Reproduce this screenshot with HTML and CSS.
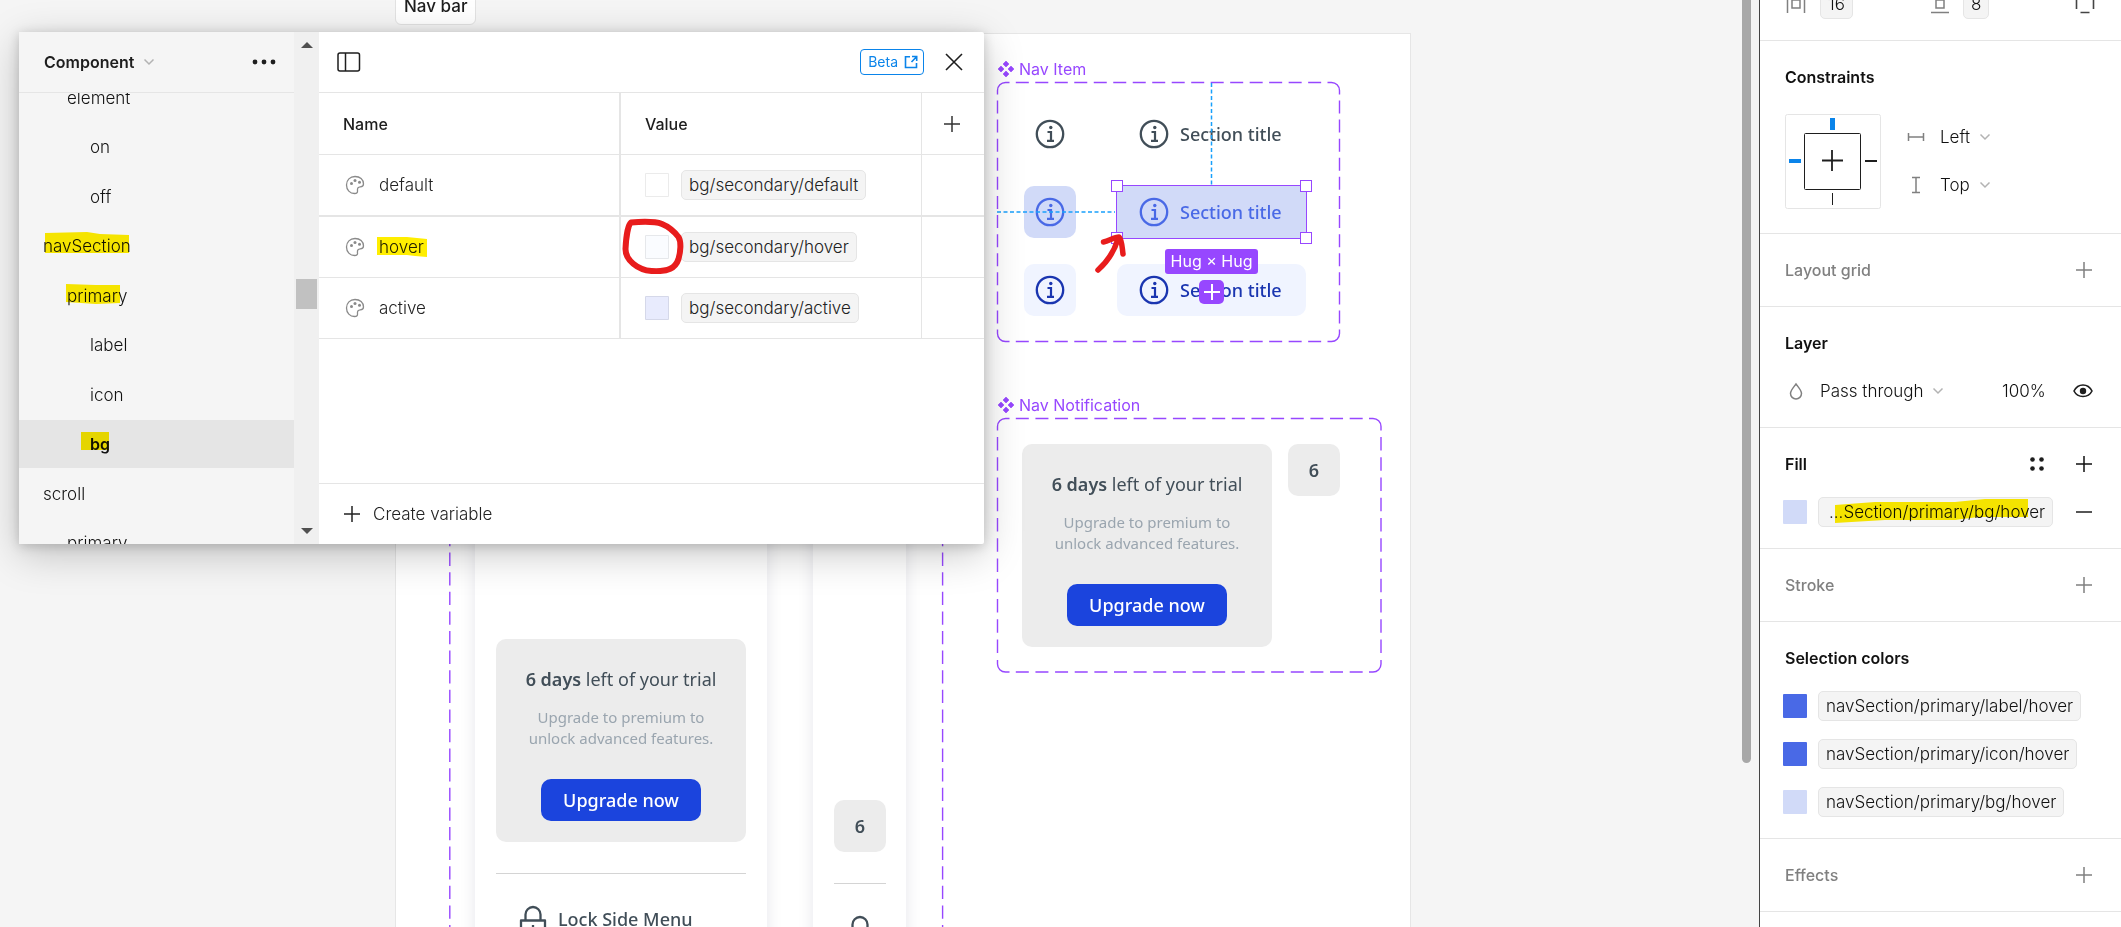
FILE: index.html
```html
<!DOCTYPE html>
<html lang="en">
<head>
<meta charset="utf-8">
<title>Nav bar</title>
<link rel="stylesheet" href="styles.css">
</head>
<body>
<svg class="defs" aria-hidden="true">
  <symbol id="plus" viewBox="0 0 18 18"><path d="M9 1v16M1 9h16" fill="none" stroke="currentColor" stroke-width="1.5"/></symbol>
  <symbol id="chevron" viewBox="0 0 12 8"><path d="M1.5 1.5 6 6l4.500-4.500" fill="none" stroke="currentColor" stroke-width="1.500"/></symbol>
  <symbol id="info" viewBox="0 0 30 30"><circle cx="15" cy="15" r="13.200" fill="none" stroke="currentColor" stroke-width="2.300"/><circle cx="15.800" cy="8.500" r="1.700" fill="currentColor"/><path d="M12.500 13h3.500v8.500M12 21.800h7" fill="none" stroke="currentColor" stroke-width="2.200"/></symbol>
  <symbol id="component" viewBox="0 0 16 16"><path d="M8 0l3 3-3 3-3-3zM8 10l3 3-3 3-3-3zM3 5l3 3-3 3-3-3zM13 5l3 3-3 3-3-3z" fill="currentColor" stroke="currentColor" stroke-width=".6" stroke-linejoin="round"/></symbol>
  <symbol id="palette" viewBox="0 0 20 20"><path d="M10 1.500C5 1.500 1.500 5 1.500 10s3.500 8.500 8 8.500c2.500 0 3.200-1 3-2.500-.3-2.800.5-4 2.800-4.200 2.200-.1 3.200-1 3.200-2.800 0-4.500-3.500-7.500-8.500-7.500z" fill="none" stroke="currentColor" stroke-width="1.300"/><circle cx="6.500" cy="8.500" r="1.500" fill="currentColor"/><circle cx="10" cy="5.500" r="1.500" fill="currentColor"/><circle cx="14.500" cy="7.300" r="1.500" fill="currentColor"/></symbol>
  <symbol id="lock" viewBox="0 0 28 34"><path d="M2 15.500h24v16H2zM6.500 15V9.500a7.500 7.500 0 0 1 15 0V15M14 20v7" fill="none" stroke="currentColor" stroke-width="2.300" stroke-linejoin="round"/></symbol>
</svg>

<main class="canvas">
  <h1 class="section-tag">Nav bar</h1>
  <div class="frame"></div>

  <section class="node navbar-set">
    <svg class="outline" width="496" height="500" viewBox="-1 -1 496 500"><path d="M.8 20v460M493.600 20v460" stroke-dasharray="13.300 6.300"/></svg>
    <div class="sidebar-wide">
      <div class="trial">
        <p class="trial-title"><strong>6 days</strong> left of your trial</p>
        <p class="trial-text">Upgrade to premium to unlock advanced features.</p>
        <button class="upgrade">Upgrade now</button>
      </div>
      <hr class="rule">
      <div class="lock-row"><svg width="28" height="34"><use href="#lock"/></svg><span>Lock Side Menu</span></div>
    </div>
    <div class="sidebar-slim">
      <div class="count">6</div>
      <hr class="rule">
      <svg width="28" height="34"><use href="#lock"/></svg>
    </div>
  </section>

  <section class="node item-set">
    <h2 class="set-name"><svg width="16" height="16"><use href="#component"/></svg>Nav Item</h2>
    <svg class="outline" width="345" height="262" viewBox="-1 -1 345 262">
      <path d="M.5 12.500v-4a8 8 0 0 1 8-8h4M330.500.5h4a8 8 0 0 1 8 8v4M342.500 247.500v4a8 8 0 0 1-8 8h-4M12.500 259.500h-4a8 8 0 0 1-8-8v-4"/>
      <path d="M18.800.5h305.400M18.800 259.500h305.400" stroke-dasharray="13 6.490"/>
      <path d="M.5 18.500v223M342.500 18.500v223" stroke-dasharray="13 6.090"/>
    </svg>
    <div class="variants">
      <div class="tile"><svg width="30" height="30"><use href="#info"/></svg></div>
      <div class="nav-item"><svg width="30" height="30"><use href="#info"/></svg>Section title</div>
      <div class="tile hover"><svg width="30" height="30"><use href="#info"/></svg></div>
      <div class="nav-item hover selected"><svg width="30" height="30"><use href="#info"/></svg>Section title
        <i class="handle tl"></i><i class="handle tr"></i><i class="handle bl"></i><i class="handle br"></i>
      </div>
      <div class="tile active"><svg width="30" height="30"><use href="#info"/></svg></div>
      <div class="nav-item active"><svg width="30" height="30"><use href="#info"/></svg>Section title</div>
    </div>
    <svg class="guides" width="345" height="262" viewBox="0 0 345 262">
      <path d="M215.500 1v102M1 130h118" fill="none" stroke="#18a0fb" stroke-width="1.500" stroke-dasharray="4 2.500"/>
    </svg>
    <span class="size-badge">Hug × Hug</span>
    <button class="add-variant" aria-label="Add variant"><svg width="18" height="18" viewBox="0 0 18 18"><path d="M9 1v16M1 9h16" stroke="#fff" stroke-width="2"/></svg></button>
    <svg class="arrow" width="32" height="40" viewBox="0 0 32 40"><path d="M4 36C13 28 20 18 24 5M9.500 8C15 7 20 3 25 3c3 3 3 10 4 17" fill="none" stroke="#e81c1c" stroke-width="5.500" stroke-linecap="round" stroke-linejoin="round"/></svg>
  </section>

  <section class="node notice-set">
    <h2 class="set-name"><svg width="16" height="16"><use href="#component"/></svg>Nav Notification</h2>
    <svg class="outline" width="387" height="257" viewBox="-1 -1 387 257">
      <path d="M.5 12.500v-4a8 8 0 0 1 8-8h4M372 .5h4a8 8 0 0 1 8 8v4M384 242v4a8 8 0 0 1-8 8h-4M12.500 254h-4a8 8 0 0 1-8-8v-4"/>
      <path d="M18.800.5h347M18.800 254h347" stroke-dasharray="13 6.640"/>
      <path d="M.5 19v216M384 19v216" stroke-dasharray="13.500 6.750"/>
    </svg>
    <div class="notices">
      <div class="trial">
        <p class="trial-title"><strong>6 days</strong> left of your trial</p>
        <p class="trial-text">Upgrade to premium to unlock advanced features.</p>
        <button class="upgrade">Upgrade now</button>
      </div>
      <div class="count">6</div>
    </div>
  </section>

  <div class="canvas-scroll"></div>

  <section class="window" aria-label="Variables">
    <aside class="groups">
      <header class="groups-head">
        <button class="collection">Component <svg width="12" height="8"><use href="#chevron"/></svg></button>
        <button class="more" aria-label="More"><svg width="24" height="6" viewBox="0 0 24 6"><g fill="#1e1e1e"><circle cx="3" cy="3" r="2.400"/><circle cx="12" cy="3" r="2.400"/><circle cx="21" cy="3" r="2.400"/></g></svg></button>
      </header>
      <nav class="tree">
        <div class="tree-rows">
          <button class="group l2">element</button>
          <button class="group l3">on</button>
          <button class="group l3">off</button>
          <button class="group l1"><span class="marked"><svg class="mark" width="86" height="22" viewBox="0 0 86 22"><path d="M2 1 44 0l13 2 29 1v18H2z"/></svg>navSection</span></button>
          <button class="group l2"><span class="marked"><svg class="mark mark-primary" width="54" height="20" viewBox="0 0 54 20"><path d="M0 0 30 1l24 0v18l-24 1L0 18z"/></svg>primary</span></button>
          <button class="group l3">label</button>
          <button class="group l3">icon</button>
          <button class="group l3 current"><span class="marked"><svg class="mark mark-bg" width="28" height="18" viewBox="0 0 28 18"><path d="M0 0h28v18H0z"/></svg>bg</span></button>
          <button class="group l1">scroll</button>
          <button class="group l2">primary</button>
        </div>
      </nav>
    </aside>
    <div class="track">
      <svg width="12" height="6" viewBox="0 0 12 6"><path d="M0 6 6 0l6 6z" fill="#505050"/></svg>
      <div class="thumb"></div>
      <svg width="12" height="6" viewBox="0 0 12 6"><path d="M0 0h12L6 6z" fill="#505050"/></svg>
    </div>
    <div class="variables">
      <header class="variables-head">
        <button aria-label="Toggle groups"><svg width="24" height="20" viewBox="0 0 24 20"><rect x="1" y="1" width="21.500" height="18" rx="2" fill="none" stroke="#1e1e1e" stroke-width="1.500"/><path d="M8.500 1v18" stroke="#1e1e1e" stroke-width="1.500"/></svg></button>
        <a class="beta" href="#beta">Beta <svg width="14" height="14" viewBox="0 0 14 14"><path d="M6 1.700H1.500v10.800h11V8M8 1.500h4.700V6M12.500 1.700 7.500 7" fill="none" stroke="currentColor" stroke-width="1.600"/></svg></a>
        <button aria-label="Close"><svg width="18" height="18" viewBox="0 0 18 18"><path d="m1 1 16 16M17 1 1 17" stroke="#1e1e1e" stroke-width="1.600"/></svg></button>
      </header>
      <table class="grid">
        <colgroup><col class="col-name"><col><col class="col-add"></colgroup>
        <thead><tr><th>Name</th><th>Value</th><th><button aria-label="Add mode"><svg width="18" height="18"><use href="#plus"/></svg></button></th></tr></thead>
        <tbody>
          <tr><td><div class="cell"><svg width="20" height="20"><use href="#palette"/></svg>default</div></td><td><div class="value"><i class="swatch white"></i><button class="chip">bg/secondary/default</button></div></td><td></td></tr>
          <tr class="split"><td><div class="cell"><svg width="20" height="20"><use href="#palette"/></svg><span class="marked"><svg class="mark mark-hover" width="50" height="20" viewBox="0 0 50 20"><path d="M0 0 30 0l20 2v18l-12-1-8-1H0z"/></svg>hover</span></div></td><td><div class="value"><i class="swatch faint"></i><button class="chip">bg/secondary/hover</button>
            <svg class="ring" width="62" height="56" viewBox="0 0 62 56"><path d="M9 4.500C6 7 4 20 3.500 31c0 11 12 21 26 22 17 1 24-3 27-12 2-7 3-17 0-22C51 12 45 8 40 6 32 3 21 3.500 9 4.500z" fill="none" stroke="#e81c1c" stroke-width="6" stroke-linejoin="round"/></svg></div></td><td></td></tr>
          <tr><td><div class="cell"><svg width="20" height="20"><use href="#palette"/></svg>active</div></td><td><div class="value"><i class="swatch lilac"></i><button class="chip">bg/secondary/active</button></div></td><td></td></tr>
        </tbody>
      </table>
      <footer class="create"><button><svg width="18" height="18"><use href="#plus"/></svg>Create variable</button></footer>
    </div>
  </section>
</main>

<aside class="inspector">
  <section class="group-box clipped">
    <div class="row">
      <svg class="lead" width="20" height="20" viewBox="0 0 20 20"><path d="M1.500 0v19M18.500 0v19M6 6h8v8H6z" fill="none" stroke="#808080" stroke-width="1.500"/></svg>
      <button class="chip pad-value">16</button>
      <svg class="pad-icon" width="20" height="20" viewBox="0 0 20 20"><path d="M1 1.500h18M1 18.500h18M6 6h8v8H6z" fill="none" stroke="#808080" stroke-width="1.500"/></svg>
      <button class="chip">8</button>
      <svg class="tail" width="20" height="20" viewBox="0 0 20 20"><path d="M1.500 4v11M18.500 4v11M5.500 18.500h9M5.500 1h9" fill="none" stroke="#444" stroke-width="1.600"/></svg>
    </div>
  </section>
  <section class="group-box">
    <h3 class="row">Constraints</h3>
    <div class="constraints">
      <svg width="96" height="96" viewBox="0 0 96 96"><rect x=".5" y="1.500" width="95" height="94" rx="2" fill="#fff" stroke="#e5e5e5"/><rect x="19.500" y="20.500" width="56" height="56" rx="1" fill="none" stroke="#1e1e1e"/><path d="M37 47.500h21M47 37v21M80 48h12" stroke="#1e1e1e" stroke-width="1.800"/><path d="M47.500 80v12" stroke="#1e1e1e"/><path d="M45 5h5v12h-5zM4 46h12v4H4z" fill="#0a84ea"/></svg>
      <div class="axes">
        <label class="axis"><svg width="18" height="18" viewBox="0 0 18 18"><path d="M1.500 5v8M16.500 5v8M1.500 9h15" fill="none" stroke="#808080" stroke-width="1.500"/></svg><select aria-label="Horizontal constraint"><option>Left</option></select><svg class="chev" width="12" height="8"><use href="#chevron"/></svg></label>
        <label class="axis"><svg width="18" height="18" viewBox="0 0 18 18"><path d="M5 1.500h8M5 16.500h8M9 1.500v15" fill="none" stroke="#808080" stroke-width="1.500"/></svg><select aria-label="Vertical constraint"><option>Top</option></select><svg class="chev" width="12" height="8"><use href="#chevron"/></svg></label>
      </div>
    </div>
  </section>
  <section class="group-box empty"><h3 class="row">Layout grid<button class="tail" aria-label="Add layout grid"><svg width="18" height="18"><use href="#plus"/></svg></button></h3></section>
  <section class="group-box">
    <h3 class="row">Layer</h3>
    <div class="row">
      <svg class="lead" width="20" height="20" viewBox="0 0 20 20"><path d="M10 3C7 7 4.500 9.500 4.500 12.500a5.500 5.500 0 0 0 11 0C15.500 9.500 13 7 10 3z" fill="none" stroke="#808080" stroke-width="1.500"/></svg>
      <select class="blend" aria-label="Blend mode"><option>Pass through</option></select><svg class="chev" width="12" height="8"><use href="#chevron"/></svg>
      <input class="opacity" aria-label="Opacity" value="100%">
      <button aria-label="Toggle visibility"><svg width="20" height="14" viewBox="0 0 20 14"><path d="M1 7c2-4 5.500-6 9-6s7 2 9 6c-2 4-5.500 5.500-9 5.500S3 11 1 7z" fill="none" stroke="#1e1e1e" stroke-width="1.600"/><circle cx="10" cy="7" r="3.200" fill="#1e1e1e"/></svg></button>
    </div>
  </section>
  <section class="group-box">
    <h3 class="row">Fill<button class="tail" aria-label="Styles"><svg width="16" height="16" viewBox="0 0 16 16"><g fill="#1e1e1e"><circle cx="3.500" cy="3.500" r="2.300"/><circle cx="12.500" cy="3.500" r="2.300"/><circle cx="3.500" cy="12.500" r="2.300"/><circle cx="12.500" cy="12.500" r="2.300"/></g></svg></button><button class="next" aria-label="Add fill"><svg width="18" height="18"><use href="#plus"/></svg></button></h3>
    <div class="row paint"><i class="swatch pale"></i><button class="chip fill-chip"><span class="marked"><svg class="mark mark-fill" width="193" height="24" viewBox="0 0 193 24"><path d="M0 6 40 3l80 0 30-3h43v18l-50 0-23 3H50L0 24z"/></svg>...Section/primary/bg/hover</span></button><button class="tail" aria-label="Remove fill"><svg width="18" height="18" viewBox="0 0 18 18"><path d="M1 9h16" stroke="#1e1e1e" stroke-width="1.500"/></svg></button></div>
  </section>
  <section class="group-box empty"><h3 class="row">Stroke<button class="tail" aria-label="Add stroke"><svg width="18" height="18"><use href="#plus"/></svg></button></h3></section>
  <section class="group-box">
    <h3 class="row">Selection colors</h3>
    <div class="row paint"><i class="swatch blue"></i><button class="chip">navSection/primary/label/hover</button></div>
    <div class="row paint"><i class="swatch blue"></i><button class="chip">navSection/primary/icon/hover</button></div>
    <div class="row paint"><i class="swatch pale"></i><button class="chip">navSection/primary/bg/hover</button></div>
  </section>
  <section class="group-box empty"><h3 class="row">Effects<button class="tail" aria-label="Add effect"><svg width="18" height="18"><use href="#plus"/></svg></button></h3></section>
</aside>
</body>
</html>
```
FILE: styles.css
```css
* { box-sizing: border-box; }
html, body { height: 100%; }
body {
  margin: 0;
  display: flex;
  overflow: hidden;
  font: 300 17px/24px Inter, sans-serif;
  color: #222;
  background: #fff;
}
h1, h2, h3, p { margin: 0; font-size: inherit; font-weight: inherit; }
svg { display: block; flex: none; }
button, select, input {
  margin: 0;
  padding: 0;
  border: 0;
  background: none;
  font: inherit;
  color: inherit;
  appearance: none;
}
.defs { position: absolute; width: 0; height: 0; }

/* Canvas */
.canvas { position: relative; flex: 1; min-width: 0; overflow: hidden; background: #f5f5f5; }
.section-tag {
  position: absolute;
  left: 395px;
  top: -13px;
  padding: 6px 8px;
  border: 1px solid #e2e2e2;
  border-radius: 6px;
  background: #fff;
  font-size: 17px;
  font-weight: 500;
  color: #1e1e1e;
}
.frame {
  position: absolute;
  left: 395px;
  top: 33px;
  bottom: -10px;
  width: 1016px;
  border: 1px solid #e6e6e6;
  background: #fff;
}
.node { position: absolute; font-family: "Noto Sans", sans-serif; font-weight: 400; color: #414e58; }
.outline { position: absolute; left: -1px; top: -1px; overflow: visible; }
.outline path { fill: none; stroke: #9747ff; stroke-width: 1.4; }
.set-name {
  position: absolute;
  left: 1px;
  bottom: 100%;
  display: flex;
  align-items: center;
  gap: 5px;
  padding-bottom: 1px;
  font-family: Inter, sans-serif;
  font-size: 16px;
  color: #9747ff;
  white-space: nowrap;
}

.trial {
  width: 250px;
  display: flex;
  flex-direction: column;
  align-items: center;
  padding: 26px 26px 21px;
  border-radius: 10px;
  background: #ececec;
  text-align: center;
}
.trial-title { font-size: 18px; line-height: 28px; white-space: nowrap; }
.trial-title strong { font-weight: 600; }
.trial-text { width: 198px; margin: 14px 0 30px; font-size: 15px; line-height: 21px; color: #9aa5af; }
.upgrade { width: 160px; height: 42px; border-radius: 10px; background: #1b44dd; color: #fff; font-size: 18px; font-weight: 500; }
.count {
  width: 52px;
  height: 52px;
  display: grid;
  place-items: center;
  border-radius: 10px;
  background: #ececec;
  font-size: 18px;
  font-weight: 600;
}
.rule { width: 100%; height: 1px; margin: 31px 0; border: 0; background: #d4d4d4; }

.navbar-set { left: 449px; top: 513px; }
.sidebar-wide, .sidebar-slim { position: absolute; top: 0; height: 440px; background: #fff; box-shadow: 0 0 14px rgba(60, 60, 100, .13); }
.sidebar-wide { left: 26px; width: 292px; padding: 126px 21px 0; }
.sidebar-slim { left: 364px; width: 93px; padding: 287px 20px 0 21px; }
.sidebar-slim svg { margin: 0 auto; }
.lock-row { display: flex; align-items: flex-start; gap: 11px; padding-left: 23px; font-size: 18px; line-height: 29px; font-weight: 500; white-space: nowrap; }

.item-set { left: 997px; top: 82px; width: 343px; height: 260px; padding: 26px 27px; }
.variants { display: grid; grid-template-columns: 52px 189px; gap: 26px 41px; }
.tile, .nav-item { position: relative; height: 52px; display: flex; align-items: center; border-radius: 10px; }
.tile { justify-content: center; }
.nav-item { gap: 11px; padding-left: 22px; font-size: 18px; font-weight: 500; white-space: nowrap; }
.hover { color: #4969e6; background: #d1daf8; }
.active { color: #1a35b0; background: #f0f4ff; }
.selected { border-radius: 0; outline: 1px solid #9747ff; }
.handle { position: absolute; width: 12px; height: 12px; border: 1px solid #9747ff; background: #fff; }
.tl { left: -6px; top: -6px; }
.tr { right: -6px; top: -6px; }
.bl { left: -6px; bottom: -6px; }
.br { right: -6px; bottom: -6px; }
.guides { position: absolute; left: -1px; top: 0; }
.size-badge {
  position: absolute;
  left: 168px;
  top: 167px;
  width: 93px;
  text-align: center;
  border-radius: 3px;
  background: #9747ff;
  color: #fff;
  font-family: Inter, sans-serif;
  font-size: 16px;
  line-height: 25px;
}
.add-variant { position: absolute; left: 202px; top: 198px; width: 25px; height: 24px; display: grid; place-items: center; border-radius: 5px; background: #9747ff; }
.arrow { position: absolute; left: 97px; top: 152px; }

.notice-set { left: 997px; top: 418px; width: 385px; height: 255px; padding: 26px 25px; }
.notices { display: flex; gap: 16px; align-items: flex-start; }

.canvas-scroll { position: absolute; right: 8px; top: -10px; width: 9px; height: 773px; border-radius: 5px; background: #a8a8a8; }

/* Variables window */
.window {
  position: absolute;
  left: 19px;
  top: 32px;
  width: 965px;
  height: 512px;
  display: flex;
  background: #fff;
  border-radius: 2px;
  box-shadow: 0 10px 40px rgba(0, 0, 0, .22), 0 2px 12px rgba(0, 0, 0, .18);
}
.groups { width: 275px; display: flex; flex-direction: column; background: #f5f5f5; }
.groups-head { height: 61px; flex: none; display: flex; align-items: center; justify-content: space-between; padding: 0 18px 0 25px; border-bottom: 1px solid #e5e5e5; }
.collection { display: flex; align-items: center; gap: 9px; font-size: 16px; font-weight: 600; color: #1e1e1e; }
.collection svg, .chev { color: #b3b3b3; }
.tree { flex: 1; min-height: 0; overflow: hidden; }
.tree-rows { height: 493px; margin-top: -19px; display: flex; flex-direction: column; justify-content: space-between; }
.group { height: 48px; flex: none; text-align: left; color: #111; }
.l1 { padding-left: 24px; }
.l2 { padding-left: 48px; }
.l3 { padding-left: 71px; }
.current { background: #e5e5e5; font-size: 16px; font-weight: 600; }
.marked { position: relative; }
.mark { position: absolute; left: 0; top: -4px; fill: #ffee00; mix-blend-mode: multiply; }
.mark-primary { left: -1px; top: -2px; }
.mark-bg { left: -9px; top: -2px; }
.mark-hover { left: -2px; top: 2px; }
.mark-fill { left: 6px; top: -3px; }

.track { width: 25px; display: flex; flex-direction: column; align-items: center; justify-content: space-between; padding: 10px 0; background: #f0f0f0; }
.thumb { width: 21px; height: 30px; margin-bottom: 76px; margin-top: 87px; background: #c1c1c1; }

.variables { flex: 1; display: flex; flex-direction: column; }
.variables-head { height: 60px; display: flex; align-items: center; padding: 0 21px 0 18px; }
.beta { height: 26px; margin: 0 21px 0 auto; padding: 0 5px 0 7px; display: flex; align-items: center; gap: 6px; border: 1px solid #0a84ea; border-radius: 4px; color: #0a84ea; font-size: 14px; font-weight: 400; text-decoration: none; }
.grid { width: 100%; table-layout: fixed; border-collapse: separate; border-spacing: 0; }
.grid th, .grid td { height: 61px; padding: 0 0 0 24px; border-top: 1px solid #e5e5e5; border-left: 2px solid #e5e5e5; text-align: left; }
.grid th { height: 62px; font-size: 16px; font-weight: 500; color: #1e1e1e; }
.grid th:first-child, .grid td:first-child { border-left: 0; }
.grid th:last-child, .grid td:last-child { border-left-width: 1px; padding-left: 21px; }
.grid .split td { border-top-width: 2px; height: 62px; }
.grid tr:last-child td { height: 62px; border-bottom: 1px solid #e5e5e5; }
.col-name { width: 300px; }
.col-add { width: 63px; }
.grid th button { display: block; color: #333; }
.cell { display: flex; align-items: center; gap: 14px; padding-left: 2px; }
.cell > svg { color: #8a8a8a; }
.value { position: relative; display: flex; align-items: center; gap: 12px; }
.ring { position: absolute; left: -23px; top: -14px; }
.swatch { width: 24px; height: 24px; flex: none; border: 1px solid rgba(0, 0, 0, .08); border-radius: 1px; }
.white { background: #fff; }
.faint { background: #fafcff; }
.lilac { background: #e8ebfd; }
.pale { background: #d1daf8; border: 0; }
.blue { background: #4969e6; border: 0; }
.chip { height: 30px; padding: 0 7px; border: 1px solid #e5e5e5; border-radius: 5px; background: #f4f4f4; white-space: nowrap; }
.create { height: 61px; margin-top: auto; display: flex; align-items: center; padding-left: 24px; border-top: 1px solid #e5e5e5; }
.create button { display: flex; align-items: center; gap: 12px; }

/* Inspector */
.inspector { width: 362px; flex: none; overflow: hidden; border-left: 1px solid #444; background: #fff; color: #111; }
.group-box { padding: 12px 28px 12px 25px; border-bottom: 1px solid #e5e5e5; }
.clipped { margin-top: -32px; }
.row { height: 48px; display: flex; align-items: center; }
h3.row { font-size: 16px; font-weight: 600; }
.empty h3.row { font-weight: 500; color: #808080; }
.tail { margin-left: auto; }
.next { margin-left: 30px; }
.lead { margin-left: 1px; margin-right: 14px; }
.pad-value { margin-right: 77px; }
.pad-icon { margin-right: 13px; }
.clipped .tail { margin-right: -2px; }
.constraints { display: flex; gap: 26px; margin: 12px 0; }
.axis { height: 48px; display: flex; align-items: center; }
.axis select { margin: 0 9px 0 15px; }
.blend { margin-right: 8px; }
.opacity { width: 44px; margin-left: auto; margin-right: 27px; }
.paint { margin-left: -2px; }
.paint .chip { margin-left: 11px; }
.paint .fill-chip { padding-left: 10px; }
```
